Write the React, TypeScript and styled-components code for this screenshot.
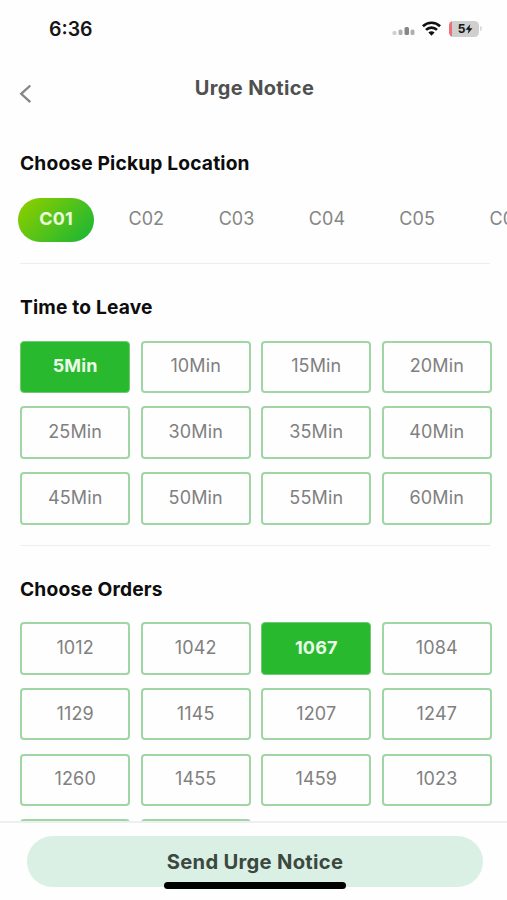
import React, { useState } from 'react';
import styled, { createGlobalStyle, css } from 'styled-components';

const GlobalStyle = createGlobalStyle`
  * { box-sizing: border-box; }
  body { margin: 0; background: #fff; }
  button { font: inherit; border: 0; background: none; padding: 0; cursor: pointer; }
`;

const Screen = styled.div`
  width: 507px;
  height: 900px;
  display: flex;
  flex-direction: column;
  overflow: hidden;
  background: #fefefe;
  font-family: Inter, sans-serif;
`;

const StatusBar = styled.div`
  height: 58px;
  flex: none;
  display: flex;
  justify-content: space-between;
  align-items: center;
  padding: 0 25px 0 49px;
`;

const Clock = styled.span`
  font-size: 19.5px;
  font-weight: 600;
  color: #161616;
`;

const Indicators = styled.div`
  display: flex;
  align-items: center;
  margin-top: -1px;
  svg { display: block; }
`;

const SignalIcon = styled.svg`
  margin: 7px 6px 0 0;
`;

const WifiIcon = styled.svg`
  margin-right: 8px;
`;

const Battery = styled.div`
  width: 30px;
  height: 16px;
  display: flex;
  align-items: center;
  justify-content: center;
  padding-left: 3px;
  border-radius: 4.5px;
  background: linear-gradient(90deg, #ed7078 2.5px, #cfcfcf 2.5px);
  font-size: 12px;
  font-weight: 700;
  color: #161616;
`;

const BatteryTip = styled.span`
  width: 2px;
  height: 5px;
  margin-left: 1px;
  border-radius: 0 2px 2px 0;
  background: #dcdcdc;
`;

const NavBar = styled.header`
  height: 72px;
  flex: none;
  display: grid;
  grid-template-columns: 60px 1fr 58px;
  padding-top: 16px;
`;

const BackButton = styled.button`
  height: 40px;
  padding-left: 19px;
  display: flex;
  align-items: center;
`;

const PageTitle = styled.h1`
  margin: 0;
  text-align: center;
  font-size: 20px;
  line-height: 29px;
  font-weight: 700;
  letter-spacing: 0.35px;
  color: #505050;
`;

const Content = styled.main`
  flex: 1;
  min-height: 0;
  overflow: hidden;
`;

const Section = styled.section<{ $top: number; $bottom: number; $last?: boolean }>`
  width: ${p => (p.$last ? 472 : 470)}px;
  margin-left: 20px;
  padding: ${p => p.$top}px 0 ${p => p.$bottom}px;
  border-bottom: ${p => (p.$last ? 'none' : '1.5px solid #eeeeee')};
`;

const SectionTitle = styled.h2`
  margin: 0;
  font-size: 19.2px;
  line-height: 24px;
  height: 24px;
  font-weight: 700;
  letter-spacing: 0.16px;
  color: #0d0d0d;
`;

const Locations = styled.div`
  width: 560px;
  display: flex;
  gap: 14.3px;
  margin: 22.5px 0 0 -2px;
`;

const LocationTab = styled.button<{ $active: boolean }>`
  width: 76px;
  height: 44px;
  flex: none;
  padding-bottom: 3px;
  border-radius: 22px;
  font-size: 18px;
  letter-spacing: 0.1px;
  color: #858585;
  ${p => p.$active && css`
    background: linear-gradient(135deg, #86cd00 10%, #28b92f 85%);
    color: #e9fbdc;
    font-weight: 700;
  `}
`;

const OptionGrid = styled.div`
  width: 472px;
  display: grid;
  grid-template-columns: repeat(4, 1fr);
  grid-auto-rows: 52.5px;
  gap: 13.2px 10.2px;
  margin-top: 21.7px;
`;

const Option = styled.button<{ $active: boolean }>`
  padding-bottom: 2px;
  border: 2px solid #9fd6a4;
  border-radius: 4px;
  font-size: 18px;
  letter-spacing: 0.15px;
  color: #808080;
  ${p => p.$active && css`
    background: #28b92f;
    border: 1px solid #72cb74;
    color: #e9fbe6;
    font-weight: 700;
  `}
`;

const Footer = styled.footer`
  position: relative;
  height: 79px;
  flex: none;
  padding: 13px 24px 0 27px;
  border-top: 2px solid #eeeff0;
  background: #fefefe;
`;

const SendButton = styled.button`
  width: 456px;
  height: 51px;
  border-radius: 26px;
  background: #dbf0e5;
  color: #3b4840;
  font-size: 20.2px;
  font-weight: 700;
  letter-spacing: 0.28px;
`;

const HomeIndicator = styled.div`
  position: absolute;
  left: 164px;
  bottom: 11px;
  width: 182px;
  height: 7px;
  border-radius: 4px;
  background: #000;
`;

const locations = ['C01', 'C02', 'C03', 'C04', 'C05', 'C06'];
const times = Array.from({ length: 12 }, (_, i) => `${(i + 1) * 5}Min`);
const orders = [
  '1012', '1042', '1067', '1084',
  '1129', '1145', '1207', '1247',
  '1260', '1455', '1459', '1023',
  '', '',
];

interface OptionsProps {
  items: string[];
  value: string;
  onChange: (value: string) => void;
}

function Options({ items, value, onChange }: OptionsProps) {
  return (
    <OptionGrid>
      {items.map((item, i) => (
        <Option key={i} $active={item === value} onClick={() => onChange(item)}>{item}</Option>
      ))}
    </OptionGrid>
  );
}

export default function App() {
  const [location, setLocation] = useState('C01');
  const [time, setTime] = useState('5Min');
  const [order, setOrder] = useState('1067');

  return (
    <Screen>
      <GlobalStyle />
      <StatusBar>
        <Clock>6:36</Clock>
        <Indicators>
          <SignalIcon width="24" height="12" viewBox="0 0 24 12">
            <rect x="0.5" y="5" width="4" height="4" rx="1.5" fill="#cfcfcf" />
            <rect x="6.5" y="3.5" width="4" height="5.5" rx="1.5" fill="#b0b0b0" />
            <rect x="12.5" y="1" width="4.5" height="8" rx="1.5" fill="#868686" />
            <rect x="18.5" y="3.5" width="4" height="5.5" rx="1.5" fill="#b0b0b0" />
          </SignalIcon>
          <WifiIcon width="19" height="15" viewBox="0 0 19 15" fill="none" stroke="#111" strokeWidth="2.7">
            <path d="M0.9 5.2a12.4 12.4 0 0 1 17.2 0" />
            <path d="M4 8.9a7.9 7.9 0 0 1 11 0" />
            <path d="M6.4 11.6a4.4 4.4 0 0 1 6.2 0l-3.1 3.2z" fill="#111" stroke="none" />
          </WifiIcon>
          <Battery>
            5
            <svg width="8" height="10" viewBox="0 0 8 10">
              <path d="M5.2 0.3 0.6 5.7h3l-0.8 4L7.5 4.3h-3z" fill="#161616" />
            </svg>
          </Battery>
          <BatteryTip />
        </Indicators>
      </StatusBar>
      <NavBar>
        <BackButton aria-label="Back">
          <svg width="14" height="20" viewBox="0 0 14 20" fill="none" stroke="#858585" strokeWidth="2.3">
            <path d="M11.3 1.5 2.2 9.8l9.1 8.3" />
          </svg>
        </BackButton>
        <PageTitle>Urge Notice</PageTitle>
      </NavBar>
      <Content>
        <Section $top={21} $bottom={21}>
          <SectionTitle>Choose Pickup Location</SectionTitle>
          <Locations>
            {locations.map(name => (
              <LocationTab key={name} $active={name === location} onClick={() => setLocation(name)}>
                {name}
              </LocationTab>
            ))}
          </Locations>
        </Section>
        <Section $top={31.5} $bottom={20}>
          <SectionTitle>Time to Leave</SectionTitle>
          <Options items={times} value={time} onChange={setTime} />
        </Section>
        <Section $top={31} $bottom={0} $last>
          <SectionTitle>Choose Orders</SectionTitle>
          <Options items={orders} value={order} onChange={setOrder} />
        </Section>
      </Content>
      <Footer>
        <SendButton>Send Urge Notice</SendButton>
        <HomeIndicator />
      </Footer>
    </Screen>
  );
}
